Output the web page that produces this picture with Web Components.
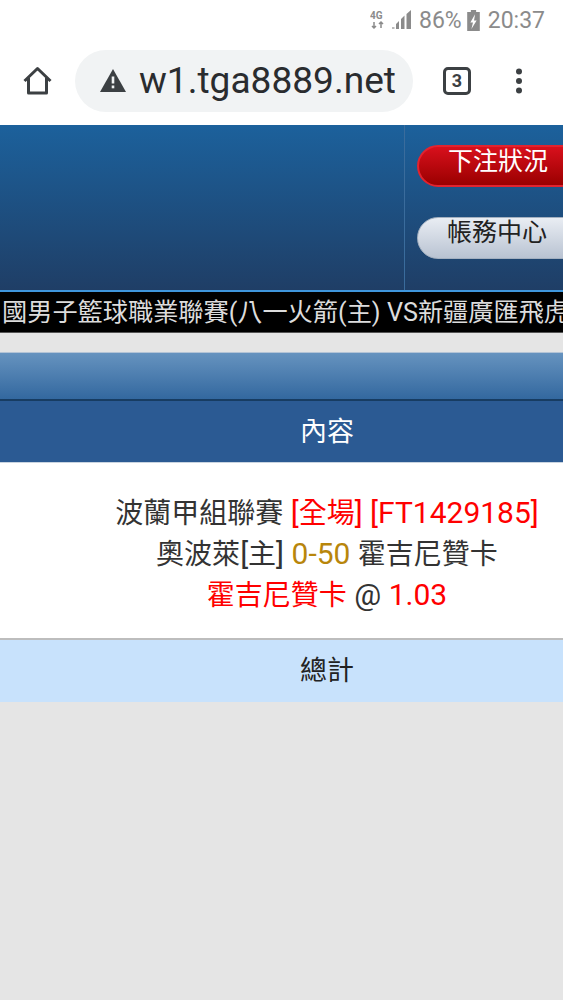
<!DOCTYPE html>
<html lang="zh-Hant">
<head>
<meta charset="utf-8">
<title>w1.tga8889.net</title>
<style>
  html, body { margin: 0; padding: 0; }
  body {
    width: 563px;
    height: 1000px;
    overflow: hidden;
    background: #e5e5e5;
    font-family: Roboto, "Noto Sans CJK TC", sans-serif;
  }
  bet-panel b { font-size: 28px; font-weight: 400; line-height: 1; }
</style>
</head>
<body>
<status-bar></status-bar>
<browser-bar url="w1.tga8889.net" tabs="3"></browser-bar>
<site-header>
  <pill-button tone="red">下注狀況</pill-button>
  <pill-button tone="grey">帳務中心</pill-button>
</site-header>
<ticker-bar>國男子籃球職業聯賽(八一火箭(主) VS新疆廣匯飛虎</ticker-bar>
<bet-panel>
  <div><span style="color:#333"><b>波蘭甲組聯賽</b></span> <span style="color:#f00">[<b>全場</b>] [FT1429185]</span></div>
  <div><span style="color:#333"><b>奧波萊</b>[<b>主</b>]</span> <span style="color:#b8860b">0-50</span> <span style="color:#333"><b>霍吉尼贊卡</b></span></div>
  <div><span style="color:#f00"><b>霍吉尼贊卡</b></span> <span style="color:#333">@</span> <span style="color:#f00">1.03</span></div>
</bet-panel>

<script>
class StatusBar extends HTMLElement {
  connectedCallback() {
    this.attachShadow({ mode: 'open' });
    this.shadowRoot.innerHTML = `
      <style>
        :host {
          display: flex;
          align-items: center;
          justify-content: flex-end;
          height: 40px;
          padding: 0 18px 0 0;
          box-sizing: border-box;
          background: #fff;
          color: #8b8b8b;
          font-family: Roboto, sans-serif;
          font-size: 23px;
        }
        svg { display: block; }
        .net { margin-right: 6px; }
        .pct { margin: 0 5px 0 7px; }
        .time { margin-left: 8px; }
        .net text { font: bold 10px Roboto, sans-serif; fill: #8b8b8b; }
      </style>
      <svg class="net" width="16" height="20" viewBox="0 0 16 20">
        <text x="0" y="9">4G</text>
        <path d="M4 12v6M2 16l2 2 2-2M11 18v-6M9 14l2-2 2 2" fill="none" stroke="#8b8b8b" stroke-width="1.5"/>
      </svg>
      <svg width="20" height="20" viewBox="0 0 20 20">
        <rect x="0" y="17" width="2.5" height="2" fill="#bbb"/>
        <path d="M4 19v-5l3-3v8zM9 19V9l3.500-3.500V19zM14.500 19V4L19 0v19z" fill="#8b8b8b"/>
      </svg>
      <span class="pct">86%</span>
      <svg width="13" height="21" viewBox="0 0 12 20">
        <path d="M3.500 0h5v2H12v18H0V2h3.500z" fill="#8b8b8b"/>
        <path d="M7.500 4 3 12h2.500L4 18l5-8H6.500z" fill="#fff"/>
      </svg>
      <span class="time">20:37</span>
    `;
  }
}

class BrowserBar extends HTMLElement {
  connectedCallback() {
    this.attachShadow({ mode: 'open' });
    this.shadowRoot.innerHTML = `
      <style>
        :host {
          display: flex;
          align-items: center;
          height: 85px;
          padding: 0 0 4px 0;
          box-sizing: border-box;
          background: #fff;
          color: #3c4043;
          font-family: Roboto, sans-serif;
        }
        svg { display: block; flex: none; }
        .home { margin-left: 23px; }
        .pill {
          display: flex;
          align-items: center;
          width: 338px;
          height: 62px;
          margin-left: 23px;
          padding-left: 25px;
          box-sizing: border-box;
          border-radius: 31px;
          background: #f1f3f4;
        }
        .url {
          margin-left: 13px;
          font-size: 37.1px;
          color: #2a2c2f;
          white-space: nowrap;
        }
        .tabs {
          flex: none;
          width: 28px;
          height: 28px;
          margin-left: 30px;
          box-sizing: border-box;
          border: 3px solid #3c4043;
          border-radius: 5px;
          font-size: 18px;
          font-weight: 700;
          line-height: 22px;
          text-align: center;
        }
        .menu { margin-left: 43px; }
      </style>
      <svg class="home" width="29" height="29" viewBox="0 0 29 29">
        <path d="M1.500 15 14.500 2.500 27.500 15M5.500 12v15h18V12" fill="none" stroke="#3c4043" stroke-width="3" stroke-linejoin="round"/>
      </svg>
      <div class="pill">
        <svg width="26" height="23" viewBox="0 0 26 23">
          <path d="M13 0 26 23H0z" fill="#3c4043"/>
          <rect x="11.700" y="7.500" width="2.600" height="7" fill="#f1f3f4"/>
          <rect x="11.700" y="16.500" width="2.600" height="2.800" fill="#f1f3f4"/>
        </svg>
        <span class="url">${this.getAttribute('url')}</span>
      </div>
      <div class="tabs">${this.getAttribute('tabs')}</div>
      <svg class="menu" width="10" height="26" viewBox="0 0 10 26">
        <circle cx="5" cy="3.500" r="3" fill="#3c4043"/>
        <circle cx="5" cy="13" r="3" fill="#3c4043"/>
        <circle cx="5" cy="22.500" r="3" fill="#3c4043"/>
      </svg>
    `;
  }
}

class SiteHeader extends HTMLElement {
  connectedCallback() {
    this.attachShadow({ mode: 'open' });
    this.shadowRoot.innerHTML = `
      <style>
        :host {
          display: flex;
          justify-content: flex-end;
          height: 165px;
          background: linear-gradient(#1c619c, #1f3e66);
          overflow: hidden;
        }
        .side {
          width: 159px;
          flex: none;
          box-sizing: border-box;
          padding: 20px 0 0 12px;
          border-left: 1px solid #3a6c9c;
          display: flex;
          flex-direction: column;
          gap: 30px;
        }
      </style>
      <div class="side"><slot></slot></div>
    `;
  }
}

class PillButton extends HTMLElement {
  connectedCallback() {
    const red = this.getAttribute('tone') === 'red';
    this.attachShadow({ mode: 'open' });
    this.shadowRoot.innerHTML = `
      <style>
        :host {
          display: block;
          width: 170px;
          height: 42px;
          padding-left: 29px;
          box-sizing: border-box;
          border-radius: 21px;
          font-family: "Noto Sans CJK TC", sans-serif;
          font-size: 25px;
          line-height: ${red ? 25 : 25}px;
          white-space: nowrap;
          ${red
            ? 'color:#fff;border:2px solid #e2232f;background:linear-gradient(#d8101c,#9a0000);'
            : 'color:#222;border:1px solid #a3b0c0;background:linear-gradient(#e9edf3,#b9c3d2);'}
        }
      </style>
      <slot></slot>
    `;
  }
}

class TickerBar extends HTMLElement {
  connectedCallback() {
    this.attachShadow({ mode: 'open' });
    this.shadowRoot.innerHTML = `
      <style>
        :host {
          display: block;
          height: 43px;
          padding-left: 2px;
          box-sizing: border-box;
          border-top: 2px solid #3f96dc;
          border-bottom: 1px solid #555;
          background: #000;
          color: #dcdcdc;
          font-family: Roboto, "Noto Sans CJK TC", sans-serif;
          font-size: 25.2px;
          line-height: 41px;
          white-space: nowrap;
          overflow: hidden;
        }
      </style>
      <slot></slot>
    `;
  }
}

class BetPanel extends HTMLElement {
  connectedCallback() {
    this.attachShadow({ mode: 'open' });
    this.shadowRoot.innerHTML = `
      <style>
        :host {
          display: block;
          margin-top: 19px;
          font-family: Roboto, "Noto Sans CJK TC", sans-serif;
        }
        .bar {
          height: 49px;
          box-sizing: border-box;
          border-top: 1px solid #b4c4d6;
          border-bottom: 2px solid #173c62;
          background: linear-gradient(#6693bf, #33689f);
        }
        .head, .total {
          height: 62px;
          padding-left: 91px;
          display: flex;
          align-items: center;
          justify-content: center;
          font-size: 27px;
          padding-bottom: 5px;
          box-sizing: border-box;
        }
        .head {
          background: #2b5a93;
          color: #fff;
          border-bottom: 1px solid #c9d4e0;
        }
        .body {
          height: 177px;
          padding: 29px 0 0 91px;
          box-sizing: border-box;
          background: #fff;
          border-bottom: 2px solid #bdbdbd;
          font-size: 30px;
          line-height: 41px;
          text-align: center;
          white-space: nowrap;
        }
        .total {
          background: #c8e2fc;
          color: #222;
        }
      </style>
      <div class="bar"></div>
      <div class="head">內容</div>
      <div class="body"><slot></slot></div>
      <div class="total">總計</div>
    `;
  }
}

customElements.define('status-bar', StatusBar);
customElements.define('browser-bar', BrowserBar);
customElements.define('site-header', SiteHeader);
customElements.define('pill-button', PillButton);
customElements.define('ticker-bar', TickerBar);
customElements.define('bet-panel', BetPanel);
</script>
</body>
</html>
